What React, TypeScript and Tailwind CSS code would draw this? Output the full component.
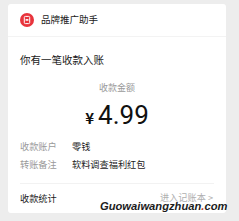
const font = { fontFamily: '"Noto Sans CJK SC", "Noto Sans", sans-serif' }

function BrandIcon() {
  return (
    <svg width="14" height="14" viewBox="0 0 14 14">
      <circle cx="7" cy="7" r="7" fill="#e8343c" />
      <rect x="4.3" y="3.4" width="5.4" height="7.2" rx="1" fill="none" stroke="#fff" strokeWidth="1" />
      <rect x="5.6" y="6" width="2.8" height="1.8" fill="#fff" opacity="0.9" />
    </svg>
  )
}

export default function App() {
  return (
    <div className="w-[239px] h-[221px] bg-[#ededed] pt-[4px] pl-[8px] overflow-hidden relative" style={font}>
      <div className="w-[218px] h-[209px] bg-white rounded-[3px] flex flex-col">
        <div className="h-[33px] shrink-0 flex items-center gap-[7px] pl-[12px] border-b border-[#f3f3f3]">
          <BrandIcon />
          <span className="text-[9.5px] text-[#1a1a1a] leading-none">品牌推广助手</span>
        </div>
        <div className="pl-[12px] pt-[18px] text-[10.5px] text-[#1a1a1a] leading-none">你有一笔收款入账</div>
        <div className="mt-[17px] text-center text-[9px] text-[#9a9a9a] leading-none">收款金额</div>
        <div className="mt-[10px] flex justify-center items-baseline text-[#111] leading-none">
          <span className="text-[15px] font-semibold mr-[4px]" style={{ fontFamily: '"Noto Sans CJK SC", sans-serif' }}>¥</span>
          <span className="text-[26px]" style={{ fontFamily: 'Roboto, "Noto Sans", sans-serif' }}>4.99</span>
        </div>
        <div className="mt-[14px] pl-[12px] flex flex-col gap-[9.5px] text-[9.2px] leading-none">
          <div className="flex">
            <span className="w-[52px] text-[#9a9a9a]">收款账户</span>
            <span className="text-[#1a1a1a]">零钱</span>
          </div>
          <div className="flex">
            <span className="w-[52px] text-[#9a9a9a]">转账备注</span>
            <span className="text-[#1a1a1a]">软料调查福利红包</span>
          </div>
        </div>
        <div className="mt-[14px] mx-[12px] border-t border-[#f2f2f2]" />
        <div className="flex-1 flex items-center justify-between pl-[12px] pr-[13px] text-[9.2px] leading-none">
          <span className="text-[#1a1a1a]">收款统计</span>
          <span className="text-[#b0b0b0] -mt-[3px]">进入记账本 &gt;</span>
        </div>
      </div>
      <div
        className="absolute left-[100px] top-[201px] text-[11.2px] font-bold italic text-[#1c1c1c] leading-none"
        style={{ fontFamily: '"Liberation Sans", Arial, sans-serif', textShadow: '0 0 1.5px #fff, 0 0 1.5px #fff, 0 0 1.5px #fff' }}
      >
        Guowaiwangzhuan<span className="text-[#c0392b]">.</span>com
      </div>
    </div>
  )
}
